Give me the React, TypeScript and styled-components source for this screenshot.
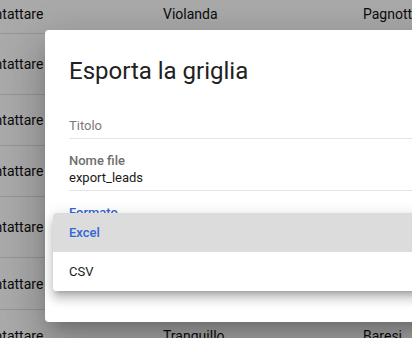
import * as React from "react";
import styled, { createGlobalStyle } from "styled-components";

const GlobalStyle = createGlobalStyle`
  html, body {
    margin: 0;
    padding: 0;
    overflow: hidden;
    background: #ffffff;
  }
  body {
    font-family: Roboto, "Liberation Sans", Arial, sans-serif;
    color: #111111;
  }
`;

const rows = [
  { status: "Da contattare", name: "Violanda", surname: "Pagnotta", height: 40 },
  { status: "Da contattare", name: "", surname: "", height: 61 },
  { status: "Da contattare", name: "", surname: "", height: 51 },
  { status: "Da contattare", name: "", surname: "", height: 51 },
  { status: "Da contattare", name: "", surname: "", height: 61 },
  { status: "Da contattare", name: "", surname: "", height: 52 },
  { status: "Da contattare", name: "Tranquillo", surname: "Baresi", height: 52 },
];

const formats = ["Excel", "CSV"];

const Screen = styled.div`
  position: relative;
  width: 412px;
  height: 338px;
  overflow: hidden;
`;

// grid is scrolled: part of the first column and first row are out of view
const Grid = styled.div`
  display: flex;
  flex-direction: column;
  margin: -6px 0 0 -57px;
  width: 700px;
`;

const Row = styled.div<{ $h: number }>`
  display: grid;
  grid-template-columns: 204px 200px 200px 96px;
  align-items: center;
  height: ${(p) => p.$h}px;
  border-bottom: 1px solid #e0e0e0;
  box-sizing: border-box;
`;

const Cell = styled.div`
  padding-left: 16px;
  font-size: 14px;
  white-space: nowrap;
  overflow: hidden;
`;

const Backdrop = styled.div`
  position: absolute;
  inset: 0;
  background: rgba(0, 0, 0, 0.335);
`;

const Dialog = styled.div`
  position: absolute;
  left: 45px;
  top: 30px;
  width: 420px;
  height: 292px;
  background: #ffffff;
  border-radius: 4px;
  box-shadow: 0px 11px 15px -7px rgba(0, 0, 0, 0.2),
    0px 24px 38px 3px rgba(0, 0, 0, 0.14), 0px 9px 46px 8px rgba(0, 0, 0, 0.12);
  display: flex;
  flex-direction: column;
`;

const Title = styled.h2`
  margin: 0;
  padding: 25px 24px 0;
  font-size: 24px;
  font-weight: 400;
  line-height: 32px;
  color: #212121;
`;

const Form = styled.div`
  display: flex;
  flex-direction: column;
  padding: 0 0 0 24px;
`;

const Field = styled.div`
  display: flex;
  flex-direction: column;
  padding: 14px 0 3px;
  border-bottom: 1px solid #e4e4e4;
`;

const Label = styled.div<{ $focused?: boolean }>`
  height: 16px;
  font-size: 13px;
  line-height: 16px;
  font-weight: 500;
  color: ${(p) => (p.$focused ? "#3367d6" : "#6e6e6e")};
`;

const Value = styled.div<{ $placeholder?: boolean }>`
  font-size: 13px;
  line-height: 18px;
  height: 18px;
  color: ${(p) => (p.$placeholder ? "#7a7a7a" : "#1a1a1a")};
`;

const Menu = styled.ul`
  position: absolute;
  left: 8px;
  top: 183px;
  width: 420px;
  margin: 0;
  padding: 0;
  list-style: none;
  background: #ffffff;
  border-radius: 4px;
  overflow: hidden;
  box-shadow: 0px 5px 5px -3px rgba(0, 0, 0, 0.2),
    0px 8px 10px 1px rgba(0, 0, 0, 0.14), 0px 3px 14px 2px rgba(0, 0, 0, 0.12);
`;

const MenuItem = styled.li<{ $selected?: boolean }>`
  height: 39px;
  display: flex;
  align-items: center;
  padding-left: 16px;
  font-size: 13px;
  font-weight: ${(p) => (p.$selected ? 500 : 400)};
  color: ${(p) => (p.$selected ? "#3367d6" : "#1a1a1a")};
  background: ${(p) => (p.$selected ? "#dcdcdc" : "#ffffff")};
`;

const TextField = ({
  label,
  value,
  focused,
}: {
  label: string;
  value: string;
  focused?: boolean;
}) => (
  <Field>
    {value ? (
      <>
        <Label $focused={focused}>{label}</Label>
        <Value>{value}</Value>
      </>
    ) : (
      <>
        <Label />
        <Value $placeholder>{label}</Value>
      </>
    )}
  </Field>
);

const App = () => {
  return (
    <Screen>
      <GlobalStyle />
      <Grid>
        {rows.map((r, i) => (
          <Row key={i} $h={r.height}>
            <Cell>{r.status}</Cell>
            <Cell>{r.name}</Cell>
            <Cell>{r.surname}</Cell>
            <Cell />
          </Row>
        ))}
      </Grid>
      <Backdrop />
      <Dialog>
        <Title>Esporta la griglia</Title>
        <Form>
          <TextField label="Titolo" value="" />
          <TextField label="Nome file" value="export_leads" />
          <TextField label="Formato" value="Excel" focused />
        </Form>
        <Menu>
          {formats.map((f, i) => (
            <MenuItem key={f} $selected={i === 0}>
              {f}
            </MenuItem>
          ))}
        </Menu>
      </Dialog>
    </Screen>
  );
};

export default App;
